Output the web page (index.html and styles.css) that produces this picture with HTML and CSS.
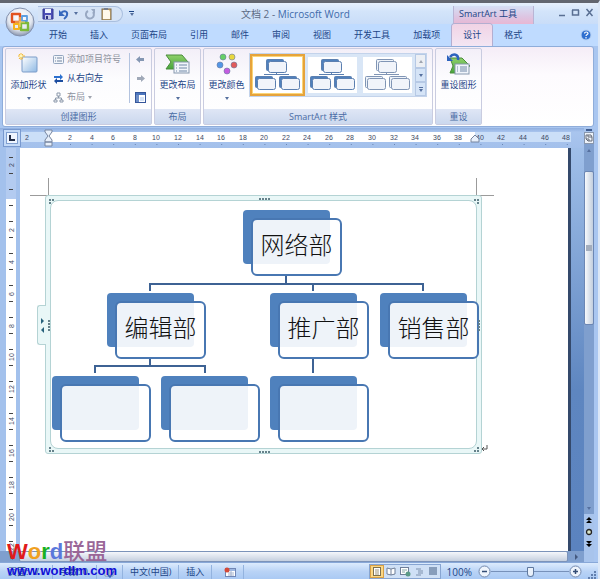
FILE: index.html
```
<!DOCTYPE html>
<html lang="zh-CN">
<head>
	<meta charset="utf-8">
	<meta name="viewport" content="width=device-width, initial-scale=1">
	<title>文档 2 - Microsoft Word</title>
	<link rel="stylesheet" href="styles.css">
</head>
<body>
<svg class="defs" width="0" height="0" aria-hidden="true">
	<defs>
		<linearGradient id="paper" x1="0" y1="0" x2="1" y2="1"><stop offset="0" stop-color="#fff"/><stop offset="1" stop-color="#8fb9e4"/></linearGradient>
		<linearGradient id="green" x1="0" y1="0" x2="0" y2="1"><stop offset="0" stop-color="#8fd06a"/><stop offset="1" stop-color="#46a53c"/></linearGradient>
		<symbol id="thumb" viewBox="0 0 48 36">
			<g class="back"><rect x="12.500" y="2.500" width="17" height="11" rx="1"/><rect x="1.500" y="19.500" width="17" height="11" rx="1"/><rect x="25.500" y="19.500" width="17" height="11" rx="1"/></g>
			<g class="front"><rect x="14.500" y="4.500" width="18" height="11" rx="2"/><rect x="3.500" y="21.500" width="18" height="11" rx="2"/><rect x="27.500" y="21.500" width="18" height="11" rx="2"/></g>
			<path class="line" d="M10 17.500h25M22.500 16v1"/>
		</symbol>
	</defs>
</svg>

<div class="window">
	<button class="orb" aria-label="Office">
		<svg width="30" height="30" viewBox="0 0 30 30">
			<defs><radialGradient id="orb" cx=".5" cy=".35" r=".65"><stop offset="0" stop-color="#fff"/><stop offset=".65" stop-color="#e3e8f1"/><stop offset="1" stop-color="#8995ad"/></radialGradient></defs>
			<circle cx="15" cy="15" r="14" fill="url(#orb)" stroke="#8391ae"/>
			<g fill="none" stroke-width="2.4" stroke-linejoin="round">
				<rect x="7" y="7" width="8" height="8" stroke="#e2521d"/>
				<rect x="17" y="9" width="5" height="5" stroke="#5b9de0" stroke-width="1.8"/>
				<rect x="9" y="17" width="5" height="5" stroke="#f5b21c" stroke-width="2"/>
				<rect x="16" y="16" width="7" height="7" stroke="#7cb93a"/>
			</g>
			<path d="M15 10v10M10 15h10" stroke="#f7d36b" stroke-width="1.2"/>
		</svg>
	</button>

	<header class="titlebar">
		<div class="quick">
			<button aria-label="保存"><svg width="12" height="12" viewBox="0 0 12 12"><path d="M1 1h10v10H1z" fill="#4c4fb5" stroke="#343a94"/><path d="M3 1h6v4H3z" fill="#eef3ff"/><path d="M3 7h6v4H3z" fill="#c7cbe8"/><path d="M4 8h2v3H4z" fill="#2e3480"/></svg></button>
			<button aria-label="撤消"><svg width="12" height="12" viewBox="0 0 12 12"><path d="M3 5c3-3 7-2 6 2-.4 2-2 3-3 4" fill="none" stroke="#3768bd" stroke-width="2"/><path d="M1 2v6h6z" fill="#3768bd"/></svg></button>
			<span class="caret"></span>
			<button class="redo" aria-label="重复"><svg width="12" height="12" viewBox="0 0 12 12"><path d="M4 3a4 4 0 1 0 5 1" fill="none" stroke="#98a8c2" stroke-width="2"/><path d="M7 1h4v5z" fill="#98a8c2"/></svg></button>
			<button aria-label="粘贴"><svg width="12" height="12" viewBox="0 0 12 12"><rect x="2" y="1" width="9" height="11" fill="#d8b77b" stroke="#7b684c"/><path d="M3 2h6l1 2v7H3z" fill="#fff8eb"/><path d="M4 0h4v2H4z" fill="#777e8d"/></svg></button>
		</div>
		<button class="customize" aria-label="自定义快速访问工具栏"><i></i><span class="caret"></span></button>
		<div class="title">文档 2 - <b>Microsoft Word</b></div>
		<div class="context">SmartArt 工具</div>
		<div class="controls">
			<button aria-label="最小化"><svg width="9" height="9" viewBox="0 0 9 9"><path d="M2 7.500h6" /></svg></button>
			<button aria-label="还原"><svg width="9" height="9" viewBox="0 0 9 9"><path d="M1 2h7M1.500 2v5h6V2" /></svg></button>
			<button aria-label="关闭"><svg width="9" height="9" viewBox="0 0 9 9"><path d="M1.500 1l6 7M7.500 1l-6 7"/></svg></button>
		</div>
	</header>

	<nav class="tabs">
		<button>开始</button><button>插入</button><button>页面布局</button><button>引用</button><button>邮件</button><button>审阅</button><button>视图</button><button>开发工具</button><button>加载项</button><button class="active">设计</button><button>格式</button>
		<button class="help" aria-label="帮助"><svg width="12" height="12" viewBox="0 0 12 12"><circle cx="6" cy="6" r="5" fill="#2e6fd0" stroke="#b9d3f4"/><path d="M4.500 4.500c0-2 3.500-2 3.500 0 0 1-2 1-2 2.500M6 8v1.500" fill="none" stroke="#fff" stroke-width="1.200"/></svg></button>
	</nav>

	<section class="ribbon">
		<div class="group create">
			<div class="tools">
				<button class="big"><svg width="22" height="22" viewBox="0 0 22 22"><rect x="4" y="4" width="15" height="15" rx="1" fill="url(#paper)" stroke="#7b9cc9"/><path d="M3 0v7M0 3h7M1 1l4 5M5 1L1 6" stroke="#f4b72d"/><circle cx="3" cy="3" r="1.500" fill="#fff8b8"/></svg><span>添加形状</span><i class="caret"></i></button>
				<div class="stack">
					<button class="off"><svg width="11" height="11" viewBox="0 0 11 11"><rect x=".5" y="1.500" width="10" height="8" rx="1" fill="#f2f5fa" stroke="#93a5be"/><path d="M2 4h1M4 4h5M2 7h1M4 7h5" stroke="#71839e"/></svg>添加项目符号</button>
					<button><svg width="11" height="11" viewBox="0 0 11 11"><path d="M1 3h6V1l3 3-3 3V5H1z" fill="#2b70cf"/><path d="M10 7H4V5L1 8l3 3V9h6z" fill="#1c4da0"/></svg>从右向左</button>
					<button class="off"><svg width="11" height="11" viewBox="0 0 11 11"><path d="M4 1h3v3H4zM1 8h3v2H1zM7 8h3v2H7zM5.500 4v2M2.500 8V6h6v2" fill="none" stroke="#8b98aa"/></svg>布局<i class="caret"></i></button>
				</div>
				<div class="stack side">
					<button aria-label="升级"><svg width="11" height="11" viewBox="0 0 11 11"><path d="M1 5.500l4-3.500v2h4v3H5v2z" fill="#8496b2"/></svg></button>
					<button aria-label="降级"><svg width="11" height="11" viewBox="0 0 11 11"><path d="M10 5.500L6 2v2H2v3h4v2z" fill="#a0a9b8"/></svg></button>
					<button aria-label="文本窗格"><svg width="11" height="11" viewBox="0 0 11 11"><rect x=".5" y=".5" width="10" height="10" fill="#fff" stroke="#35569a"/><path d="M1 1h9v2H1z" fill="#4b75bd"/><path d="M1 3h3v7H1z" fill="#6c8dc7"/><path d="M5 5h4v4H5z" fill="#d5e3f7"/></svg></button>
				</div>
			</div>
			<h2>创建图形</h2>
		</div>

		<div class="group narrow">
			<div class="tools">
				<button class="big"><svg width="26" height="22" viewBox="0 0 26 22"><path d="M1 2h16l6 7-6 7H1l5-7z" fill="url(#green)" stroke="#4a8c3c"/><rect x="9" y="9" width="15" height="11" fill="#f1f5fb" stroke="#8798ae"/><path d="M11 12h1M14 12h8M11 15h1M14 15h8M11 18h1M14 18h8" stroke="#7188a7"/></svg><span>更改布局</span><i class="caret"></i></button>
			</div>
			<h2>布局</h2>
		</div>

		<div class="group styles">
			<div class="tools">
				<button class="big"><svg width="22" height="22" viewBox="0 0 22 22" stroke="#6679a0" stroke-width=".6"><circle cx="7" cy="4" r="3" fill="#66cf67"/><circle cx="16" cy="4" r="3" fill="#e8d73f"/><circle cx="4" cy="12" r="3" fill="#5396e6"/><circle cx="18" cy="12" r="3" fill="#e15c5c"/><circle cx="11" cy="18" r="3" fill="#c45ce0"/></svg><span>更改颜色</span><i class="caret"></i></button>
				<div class="gallery">
					<button class="chosen" aria-label="简单填充"><svg class="thumb" width="48" height="36"><use href="#thumb"/></svg></button>
					<button aria-label="白色轮廓"><svg class="thumb" width="48" height="36"><use href="#thumb"/></svg></button>
					<button aria-label="细微效果"><svg class="thumb pale" width="48" height="36"><use href="#thumb"/></svg></button>
					<div class="pager">
						<button class="off" aria-label="上一行"><i class="caret up"></i></button>
						<button aria-label="下一行"><i class="caret"></i></button>
						<button class="more" aria-label="其他"><i class="bar"></i><i class="caret"></i></button>
					</div>
				</div>
			</div>
			<h2>SmartArt 样式</h2>
		</div>

		<div class="group narrow">
			<div class="tools">
				<button class="big"><svg width="26" height="22" viewBox="0 0 26 22"><path d="M4 5h12l8 8-3 2v5H4l3-7z" fill="url(#green)" stroke="#4a8c3c"/><rect x="9" y="11" width="14" height="10" fill="#f1f5fb" stroke="#8798ae"/><path d="M11 14h1M14 14h7M11 16h1M14 16h7M11 18h1M14 18h7" stroke="#7188a7"/><path d="M4 4c3-4 9-3 8 3" fill="none" stroke="#2d63bd" stroke-width="2.500"/><path d="M1 2v6h6z" fill="#2d63bd"/></svg><span>重设图形</span></button>
			</div>
			<h2>重设</h2>
		</div>
	</section>

	<main class="work">
		<div class="document">
			<div class="hruler">
				<button class="tabstop" aria-label="制表符"><svg width="18" height="18" viewBox="0 0 18 18"><rect x="3.500" y="3.500" width="11" height="11" fill="#eef5ff" stroke="#7f9fd0"/><path d="M7 6v5h5" fill="none" stroke="#222d47" stroke-width="2"/></svg></button>
				<svg class="scale" width="550" height="18" viewBox="0 0 550 18">
					<rect y="3" width="550" height="10" fill="#cbdff8"/>
					<rect x="27" y="3" width="427" height="10" fill="#fff"/>
					<g text-anchor="middle">
						<text x="6" y="11">2</text><text x="49" y="11">2</text><text x="71" y="11">4</text><text x="92" y="11">6</text><text x="114" y="11">8</text><text x="135" y="11">10</text><text x="157" y="11">12</text><text x="179" y="11">14</text><text x="200" y="11">16</text><text x="222" y="11">18</text><text x="243" y="11">20</text><text x="265" y="11">22</text><text x="286" y="11">24</text><text x="308" y="11">26</text><text x="329" y="11">28</text><text x="351" y="11">30</text><text x="373" y="11">32</text><text x="394" y="11">34</text><text x="416" y="11">36</text><text x="437" y="11">38</text><text x="459" y="11">40</text><text x="480" y="11">42</text><text x="502" y="11">44</text><text x="524" y="11">46</text><text x="545" y="11">48</text>
					</g>
					<path d="M49 15.500H550" stroke="#6b87b5" stroke-dasharray="1 20.600"/>
					<path d="M24 1h7v2l-3 4 3 4v2h-7v-2l3-4-3-4zM24 13h7v4h-7zM450 13v-3l4-4 4 4v3z" fill="#e8f0fb" stroke="#76859f"/>
				</svg>
			</div>

			<div class="paper-row">
				<svg class="vruler" width="20" height="403" viewBox="0 0 20 403">
					<rect width="20" height="403" fill="#a3c1ec"/><rect x="6" width="10" height="403" fill="#fff"/><rect x="6" width="10" height="51" fill="#b3cbf0"/>
					<g text-anchor="middle">
						<text transform="translate(14 17) rotate(-90)">2</text><text transform="translate(14 82) rotate(-90)">2</text><text transform="translate(14 114) rotate(-90)">4</text><text transform="translate(14 146) rotate(-90)">6</text><text transform="translate(14 178) rotate(-90)">8</text><text transform="translate(14 209) rotate(-90)">10</text><text transform="translate(14 241) rotate(-90)">12</text><text transform="translate(14 273) rotate(-90)">14</text><text transform="translate(14 305) rotate(-90)">16</text><text transform="translate(14 337) rotate(-90)">18</text><text transform="translate(14 369) rotate(-90)">20</text><text transform="translate(14 399) rotate(-90)">22</text>
					</g>
					<path d="M11 9v400" stroke="#444" stroke-width="4" stroke-dasharray="1 15"/>
				</svg>
				<article class="page">
					<svg class="marks" width="480" height="320" viewBox="0 0 480 320" fill="none" stroke="#9b9b9b"><path d="M10 47.500h18M28.500 30v18M456.500 30v18M456 47.500h18"/><path d="M467 297v4h-5m2-2l-2 2 2 2" stroke="#555"/></svg>
					<div class="canvas">
						<div class="inner"></div>
						<button class="pane" aria-label="文本窗格"><i></i><i></i></button>
						<svg class="wires" width="436" height="259" viewBox="0 0 436 259" fill="none" stroke="#3d6294" stroke-width="2"><path d="M240 80v8M104 95v-7h273v7M267 88v7M104 163v7M49 177v-7h110v7M267 163v14"/></svg>
						<div class="node root"><span>网络部</span></div>
						<div class="node edit"><span>编辑部</span></div>
						<div class="node promo"><span>推广部</span></div>
						<div class="node sales"><span>销售部</span></div>
						<div class="node sub1"><span></span></div>
						<div class="node sub2"><span></span></div>
						<div class="node sub3"><span></span></div>
						<svg class="grips" width="436" height="259" viewBox="0 0 436 259" stroke="#66828b" stroke-width="2" stroke-dasharray="2 1"><path d="M213 3h12M213 256h12M3 124v12M433 124v12M3 4h5M3 7h2M428 4h5M431 7h2M3 255h5M3 252h2M428 255h5M431 252h2"/></svg>
					</div>
				</article>
				<div class="desk"></div>
			</div>

			<div class="hscroll"><button aria-label="向左"><i class="caret left"></i></button><div class="hthumb"></div><button aria-label="向右"><i class="caret right"></i></button></div>
		</div>

		<div class="vscroll">
			<div class="split"></div>
			<button class="toggle" aria-label="标尺"><svg width="10" height="12" viewBox="0 0 10 12"><rect x=".5" y=".5" width="9" height="11" fill="#eef3fa" stroke="#8997ad"/><path d="M2 3h5l1 2v4H4L2 7zM4 3v2h4M2 7h3v2" fill="none" stroke="#666d79"/></svg></button>
			<button aria-label="向上"><i class="caret up"></i></button>
			<div class="track"><div class="vthumb"></div></div>
			<button aria-label="向下"><i class="caret"></i></button>
			<div class="browse">
				<button aria-label="前一页"><svg width="8" height="8"><path d="M1 4l3-3 3 3zM1 7l3-3 3 3z"/></svg></button>
				<button aria-label="选择浏览对象"><svg width="8" height="8"><circle cx="4" cy="4" r="2.500" fill="#dce7c9" stroke="#222" stroke-width="1.300"/></svg></button>
				<button aria-label="下一页"><svg width="8" height="8"><path d="M1 1l3 3 3-3zM1 4l3 3 3-3z"/></svg></button>
			</div>
		</div>
	</main>

	<footer class="status">
		<span class="cell pages">页面: 1/1</span>
		<span class="cell words">字数: 0</span>
		<span class="cell"><svg width="11" height="11" viewBox="0 0 11 11"><path d="M1 2h4v7H1zM5 2h4v7H5z" fill="#fff" stroke="#7890b5"/><path d="M4 8l2 2 4-6" fill="none" stroke="#385fc1" stroke-width="1.500"/></svg></span>
		<span class="cell lang">中文(中国)</span>
		<span class="cell">插入</span>
		<span class="cell macro"><svg width="12" height="11" viewBox="0 0 12 11"><rect x="1.500" y="1.500" width="10" height="8" fill="#fff" stroke="#7086b5"/><path d="M2 2h9v2H2z" fill="#9db7e1"/><path d="M4 6h6M4 8h6M7 4v5" stroke="#a6b4cf"/><circle cx="3" cy="3" r="2.500" fill="#d44a39"/></svg></span>
		<div class="views">
			<button class="on" aria-label="页面视图"><svg width="12" height="11" viewBox="0 0 12 11"><rect x="2.500" y="1.500" width="7" height="8" fill="#fff" stroke="#7c7050"/><path d="M4 4h4M4 6h4M4 8h4" stroke="#9d957d"/></svg></button>
			<button aria-label="阅读版式"><svg width="12" height="11" viewBox="0 0 12 11"><path d="M6 3L2 2v6l4 1 4-1V2zM6 3v6" fill="#fff" stroke="#6f7f99"/></svg></button>
			<button aria-label="Web 版式"><svg width="12" height="11" viewBox="0 0 12 11"><rect x="1.500" y="1.500" width="8" height="7" fill="#fff" stroke="#6f7f99"/><path d="M3 4h5M3 6h3" stroke="#8aa"/><circle cx="9" cy="8" r="2.500" fill="#5a9a86"/></svg></button>
			<button aria-label="大纲"><svg width="12" height="11" viewBox="0 0 12 11"><path d="M3 3h5M5 5h5M5 7h5M3 9h5" stroke="#7d90ad"/></svg></button>
			<button aria-label="草稿"><svg width="12" height="11" viewBox="0 0 12 11"><path d="M2 2h8M2 4h8M2 6h8M2 8h8" stroke="#7086a8" stroke-width="1.300"/></svg></button>
		</div>
		<button class="percent">100%</button>
		<button class="round" aria-label="缩小"><svg width="13" height="13" viewBox="0 0 13 13"><circle cx="6.500" cy="6.500" r="5.500" fill="#eef4fc" stroke="#7389ae"/><path d="M4 6.500h5" stroke="#344d76" stroke-width="1.500"/></svg></button>
		<input class="zoom" type="range" min="0" max="100" value="50" aria-label="显示比例">
		<button class="round" aria-label="放大"><svg width="13" height="13" viewBox="0 0 13 13"><circle cx="6.500" cy="6.500" r="5.500" fill="#eef4fc" stroke="#7389ae"/><path d="M4 6.500h5M6.500 4v5" stroke="#344d76" stroke-width="1.500"/></svg></button>
		<svg class="grip" width="10" height="10" viewBox="0 0 10 10"><path d="M7 1h2v2H7zM7 4h2v2H7zM4 4h2v2H4zM7 7h2v2H7zM4 7h2v2H4zM1 7h2v2H1z" fill="#617fae"/></svg>
	</footer>

	<div class="watermark">
		<div class="brand"><span class="w">W</span><span class="o">o</span><span class="r">r</span><span class="d">d</span><span class="cn">联盟</span></div>
		<a href="http://www.wordlm.com">www.wordlm.com</a>
	</div>
</div>
</body>
</html>
```
FILE: styles.css
```
* {
	box-sizing: border-box;
	margin: 0;
	padding: 0;
}

:root {
	--ink: #1c4587;
	--blue: #4f81bd;
}

body {
	font: 9px/12px "Open Sans", "Noto Sans CJK SC", sans-serif;
	color: var(--ink);
	background: #a9c6f0;
}

button {
	border: 0;
	background: none;
	font: inherit;
	color: inherit;
	display: flex;
	align-items: center;
	justify-content: center;
	white-space: nowrap;
}

svg {
	display: block;
	flex: none;
}

.defs {
	position: absolute;
}

.window {
	position: relative;
	min-height: 100vh;
	display: flex;
	flex-direction: column;
	border-top: 3px solid #62666f;
	border-right: 2px solid #dbe7f7;
	overflow: hidden;
}

.caret {
	display: block;
	border: 2px solid transparent;
	border-top: 3px solid #55709f;
	border-bottom: 0;
}

.caret.up {
	border-top: 0;
	border-bottom: 3px solid #55709f;
}

.caret.left {
	border: 3px solid transparent;
	border-right-color: #44597f;
	border-left: 0;
}

.caret.right {
	border: 3px solid transparent;
	border-left-color: #44597f;
	border-right: 0;
}

/* title bar */

.orb {
	position: absolute;
	left: 5px;
	top: 4px;
	z-index: 2;
}

.titlebar {
	height: 21px;
	display: flex;
	align-items: center;
	padding-left: 38px;
	background: linear-gradient(#e6f0fc, #d3e4fa 40%, #c9ddf8);
}

.quick {
	display: flex;
	align-items: center;
	gap: 4px;
	height: 16px;
	padding: 0 10px 0 4px;
	border: 1px solid #a9bfdf;
	border-left: 0;
	border-radius: 0 8px 8px 0;
	background: #d5e3f6;
}

.quick .redo {
	margin-left: 2px;
}

.customize {
	flex-direction: column;
	gap: 1px;
	margin-left: 6px;
}

.customize i {
	width: 5px;
	border-top: 1px solid var(--ink);
}

.title {
	flex: 1;
	padding-left: 107px;
	font-size: 10px;
	color: #5c6b85;
	white-space: nowrap;
}

.title b {
	font-weight: normal;
	color: #3e6aaa;
}

.context {
	width: 81px;
	height: 18px;
	align-self: flex-end;
	padding: 2px 5px;
	border: solid #b9b5d5;
	border-width: 0 1px;
	background: linear-gradient(#d5dff5, #ddc5e2 60%, #e8b7d3);
	white-space: nowrap;
}

.controls {
	display: flex;
	gap: 5px;
	padding: 0 4px 3px 23px;
}

.controls path {
	fill: none;
	stroke: #596f93;
	stroke-width: 1.5;
}

/* tabs */

.tabs {
	display: flex;
	gap: 1px;
	height: 22px;
	padding: 0 6px 0 38px;
	background: #bfdbff;
}

.tabs button {
	padding: 0 11px;
}

.tabs .active {
	border-radius: 3px 3px 0 0;
	background: linear-gradient(#f1d3e5, #f3e6f3);
	box-shadow: 0 0 0 1px #b3aed0;
}

.tabs .help {
	margin-left: auto;
	padding: 0;
}

/* ribbon */

.ribbon {
	display: flex;
	gap: 2px;
	height: 81px;
	margin: 0 4px 1px 2px;
	padding: 1px 2px;
	border: 1px solid #8fadda;
	border-radius: 3px;
	background: linear-gradient(#f5edf7, #fdfbfe 35%, #fff);
}

.group {
	display: flex;
	flex-direction: column;
	border: 1px solid #c9cce0;
	border-radius: 2px;
	background: linear-gradient(#f3eff8, #fcfcfe 40%, #fff);
}

.group h2 {
	height: 15px;
	font-size: 9px;
	line-height: 15px;
	font-weight: normal;
	text-align: center;
	color: #4a6ca5;
	background: linear-gradient(#dfe6f5, #cbd8ee);
}

.create {
	width: 147px;
}

.narrow {
	width: 47px;
}

.styles {
	width: 230px;
}

.tools {
	flex: 1;
	display: flex;
	align-items: flex-start;
}

.big {
	flex-direction: column;
	width: 45px;
	padding-top: 4px;
}

.big span {
	margin-top: 4px;
}

.big .caret {
	margin-top: 6px;
}

.stack {
	display: flex;
	flex-direction: column;
	gap: 7px;
	margin: 4px 0 0 2px;
}

.stack button {
	height: 12px;
	gap: 3px;
	justify-content: flex-start;
}

.off {
	color: #8d929e;
}

.off .caret {
	border-top-color: #a0a5b0;
	border-bottom-color: #a0a5b0;
}

.side {
	margin-left: auto;
	padding: 0 5px;
	border-left: 1px solid #b3c3df;
}

.gallery {
	display: flex;
	width: 178px;
	height: 44px;
	margin-top: 4px;
	border: 1px solid #c3d3eb;
	background: #d9e6f6;
}

.gallery > button {
	width: 55px;
	height: 42px;
	border: 3px solid #d9e6f6;
	background: #fff;
}

.gallery > .chosen {
	border: 2px solid #e6a33b;
	box-shadow: inset 0 0 0 1px #fbd577;
}

.thumb {
	--back: #4f81bd;
	fill: none;
	stroke: #5b7fb0;
	stroke-width: 1;
}

.pale {
	--back: #eef3f9;
	stroke: #8095b5;
}

.back {
	fill: var(--back);
}

.front {
	fill: #f1f4fa;
}

.pager {
	flex: 1;
	display: flex;
	flex-direction: column;
}

.pager button {
	flex: 1;
	flex-direction: column;
	gap: 1px;
	border: 1px solid #b6c9e5;
	background: #d5e4f7;
}

.pager .off {
	background: #eceff4;
}

.bar {
	width: 4px;
	border-top: 1px solid #55709f;
}

/* rulers and page */

.work {
	flex: 1;
	display: flex;
	padding-right: 4px;
}

.document {
	flex: 1;
	min-width: 0;
	display: flex;
	flex-direction: column;
}

.hruler {
	display: flex;
	height: 20px;
	padding-left: 3px;
	align-items: center;
	background: linear-gradient(#8fafdf, #a9c5ee 20%, #a3c0eb);
}

.tabstop {
	border: 1px solid #7899cf;
	height: 18px;
	width: 18px;
	background: #c4daf7;
}

.hruler text,
.vruler text {
	font: 7px "Liberation Sans", sans-serif;
	fill: #3d4963;
}

.paper-row {
	flex: 1;
	display: flex;
}

.vruler {
	background: #a3c1ec;
}

.page {
	position: relative;
	flex: 1;
	background: #fff;
}

.desk {
	width: 16px;
	border-left: 3px solid #34496b;
	background: linear-gradient(#a0bfe9, #5e86c0 60%, #5b83bf);
}

.marks,
.wires,
.grips {
	position: absolute;
	left: 0;
	top: 0;
}

/* organisation chart */

.canvas {
	position: absolute;
	left: 25px;
	top: 47px;
	width: 437px;
	height: 259px;
	border: 1px solid #b4d3d4;
	border-radius: 3px;
	background: #e9f7f7;
}

.inner {
	height: 249px;
	margin: 4px;
	border: 1px solid #b4d3d4;
	border-radius: 8px;
	background: #fff;
}

.pane {
	position: absolute;
	left: -9px;
	top: 109px;
	width: 9px;
	height: 40px;
	flex-direction: column;
	gap: 3px;
	border: 1px solid #b4d3d4;
	border-right: 0;
	border-radius: 3px 0 0 3px;
	background: #e9f7f7;
}

.pane i {
	border: 3px solid transparent;
	border-left-color: #27617b;
	border-right: 0;
}

.pane i + i {
	border: 3px solid transparent;
	border-right-color: #27617b;
	border-left: 0;
}

.node {
	position: absolute;
	width: 87px;
	height: 54px;
	border-radius: 4px;
	background: var(--blue);
}

.node span {
	position: absolute;
	left: 8px;
	top: 8px;
	width: 91px;
	height: 58px;
	border: 2px solid #4877b2;
	border-radius: 6px;
	background: #ffffffe6;
	font: 300 24px/48px "Noto Sans CJK SC", sans-serif;
	text-align: center;
	color: #111;
}

.root { left: 197px; top: 14px; }
.edit { left: 61px; top: 97px; }
.promo { left: 224px; top: 97px; }
.sales { left: 334px; top: 97px; }
.sub1 { left: 6px; top: 180px; }
.sub2 { left: 115px; top: 180px; }
.sub3 { left: 224px; top: 180px; }

/* scroll bars */

.hscroll {
	display: flex;
	height: 11px;
	padding-left: 3px;
	background: #7f9fce;
}

.hscroll button {
	width: 16px;
}

.hthumb {
	flex: 1;
	border: 1px solid #7c93b9;
	border-radius: 2px;
	background: linear-gradient(#f5f7fb, #c5cfdf);
}

.vscroll {
	width: 10px;
	display: flex;
	flex-direction: column;
	background: #a8c4ec;
}

.split {
	height: 2px;
	margin: 1px 2px;
	background: #3f5d91;
}

.vscroll > button {
	height: 12px;
	background: #7f9fce;
}

.track {
	flex: 1;
	padding-top: 15px;
	background: #7f9fce;
}

.vthumb {
	height: 154px;
	border: 1px solid #6c87b4;
	border-radius: 2px;
	background: linear-gradient(#a3adbd, #a3adbd) center / 6px 6px no-repeat, linear-gradient(90deg, #f7f9fc, #c2cede);
}

.browse {
	display: flex;
	flex-direction: column;
	gap: 4px;
	padding: 2px 0 14px;
}

/* status bar */

.status {
	display: flex;
	align-items: center;
	height: 18px;
	padding: 0 1px 0 3px;
	border-top: 1px solid #88a8d8;
	background: linear-gradient(#dcebfd, #b9d3f6 50%, #a8c8f3);
}

.cell {
	height: 14px;
	padding: 0 7px;
	line-height: 13px;
	border-right: 1px solid #93b3df;
	white-space: nowrap;
}

.cell svg {
	margin-top: 2px;
}

.pages {
	width: 50px;
	padding-left: 5px;
}

.words {
	width: 44px;
}

.macro {
	padding: 0 7px 0 12px;
}

.views {
	display: flex;
	margin-left: auto;
	border: 1px solid #87a5d2;
	background: #cfe0f6;
}

.views button {
	width: 14px;
	height: 13px;
}

.views .on {
	background: #fbd784;
	box-shadow: inset 0 0 0 1px #d9a044;
}

.percent {
	padding: 0 6px;
	font-size: 10px;
}

.zoom {
	appearance: none;
	width: 78px;
	height: 12px;
	background: linear-gradient(#7791ba, #7791ba) center / 100% 1px no-repeat;
}

.zoom::-webkit-slider-thumb {
	appearance: none;
	width: 7px;
	height: 10px;
	border: 1px solid #60799f;
	border-radius: 1px 1px 4px 4px;
	background: #e9f1fb;
}

.grip {
	margin-left: 5px;
	align-self: flex-end;
}

/* watermark */

.watermark {
	position: absolute;
	left: 7px;
	bottom: 2px;
	white-space: nowrap;
	font-family: "Liberation Sans", "Noto Sans CJK SC", sans-serif;
}

.brand {
	display: flex;
	align-items: baseline;
	font-size: 22px;
	line-height: 24px;
	font-weight: bold;
}

.brand .w { color: #e01b1b; }
.brand .o { color: #f0a020; }
.brand .r { color: #18b022; }
.brand .d { color: #5b78dc; }

.brand .cn {
	font-weight: 500;
	color: #9a6698;
}

.watermark a {
	display: block;
	font-size: 13px;
	line-height: 14px;
	font-weight: bold;
	color: #1010d8;
	text-decoration: none;
}
```
